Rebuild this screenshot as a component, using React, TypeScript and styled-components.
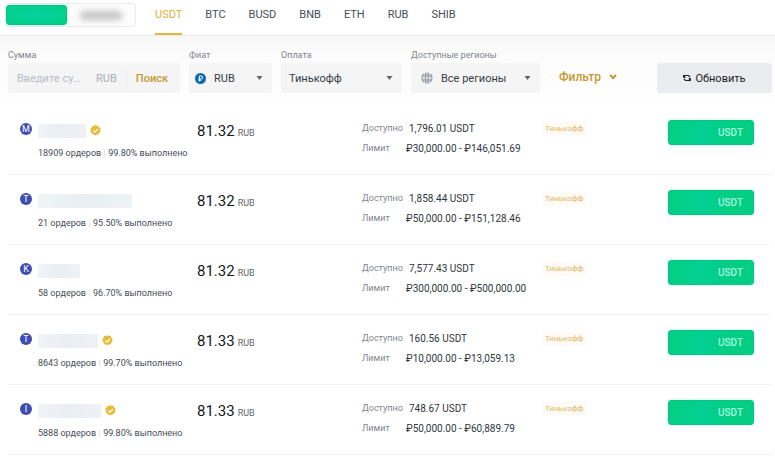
import React from "react";
import styled, { createGlobalStyle } from "styled-components";

const GlobalStyle = createGlobalStyle`
  * { box-sizing: border-box; }
  body {
    margin: 0;
    background: #fff;
    color: #1e2329;
    font-family: Roboto, "Noto Sans", sans-serif;
  }
  button, input, select { font-family: inherit; }
  button { cursor: pointer; }
`;

const Header = styled.header`
  display: flex;
  align-items: flex-start;
  height: 36px;
  padding: 3px 5px 0;
  border-bottom: 1px solid #e9eaec;
  background: #fff;
`;

const ModeSwitch = styled.div`
  display: flex;
  align-items: center;
  flex: none;
  width: 131px;
  height: 24px;
  border: 1px solid #ececec;
  border-radius: 3px;
  background: #fdfdfd;
`;

const ModeButton = styled.button<{ $active?: boolean }>`
  display: flex;
  align-items: center;
  justify-content: center;
  flex: ${(p) => (p.$active ? "0 0 61px" : "1")};
  height: 20px;
  padding: 0;
  border: ${(p) => (p.$active ? "1px solid #02c884" : "0")};
  border-radius: 3px;
  background: ${(p) => (p.$active ? "radial-gradient(#03d29e, #03cd86)" : "transparent")};
  box-shadow: ${(p) => (p.$active ? "0 0 3px #a5f5dc" : "none")};
`;

const HiddenWord = styled.span`
  width: 42px;
  height: 9px;
  border-radius: 4px;
  background: #c4c4c4;
  filter: blur(3px);
`;

const Tabs = styled.nav`
  display: flex;
  gap: 23px;
  margin-left: 19px;
`;

const Tab = styled.button<{ $active?: boolean }>`
  height: 32px;
  padding: 0 0 6px;
  border: 0;
  border-bottom: 2px solid ${(p) => (p.$active ? "#e3b93a" : "transparent")};
  background: none;
  color: ${(p) => (p.$active ? "#d9b13b" : "#474d57")};
  font-size: 11px;
  line-height: 20px;
`;

const Filters = styled.form`
  display: flex;
  align-items: flex-end;
  gap: 9px;
  height: 69px;
  padding: 0 3px 12px 8px;
  background: linear-gradient(#f8f8f8, #fcfcfc 20px, #fefefe);
`;

const Field = styled.div<{ $size: number }>`
  flex: ${(p) => p.$size} 1 0;
  min-width: 0;
`;

const FieldLabel = styled.label`
  display: block;
  height: 14px;
  color: #81858c;
  font-size: 9px;
  line-height: 12px;
  white-space: nowrap;
`;

const Control = styled.div`
  display: flex;
  align-items: center;
  gap: 6px;
  height: 30px;
  padding: 0 9px 0 6px;
  border-radius: 3px;
  background: #f5f5f5;
`;

const RegionControl = styled(Control)`
  padding-left: 10px;
`;

const AmountControl = styled(Control)`
  gap: 9px;
  padding: 0 12px 0 9px;
`;

const AmountInput = styled.input`
  flex: 1;
  width: 0;
  min-width: 0;
  padding: 0;
  border: 0;
  outline: 0;
  background: none;
  color: #474d57;
  font-size: 11px;
  text-overflow: ellipsis;
  &::placeholder { color: #b9bdc4; opacity: 1; }
`;

const Currency = styled.span`
  color: #aaaeb5;
  font-size: 11px;
`;

const Divider = styled.span`
  width: 1px;
  height: 18px;
  background: #ececec;
`;

const SearchButton = styled.button`
  padding: 0;
  border: 0;
  background: none;
  color: #c69834;
  font-size: 11px;
  font-weight: 500;
`;

const Select = styled.select`
  flex: 1;
  min-width: 0;
  height: 30px;
  padding: 0;
  margin-left: 2px;
  border: 0;
  outline: 0;
  appearance: none;
  background: none;
  color: #373c44;
  font-size: 11px;
`;

const FilterSlot = styled.div`
  flex: 108 1 0;
  min-width: 0;
`;

const FilterButton = styled.button`
  display: flex;
  align-items: center;
  gap: 8px;
  height: 32px;
  padding: 0 0 0 10px;
  border: 0;
  background: none;
  color: #c69834;
  font-size: 12px;
  font-weight: 500;
`;

const RefreshButton = styled.button`
  display: flex;
  align-items: center;
  justify-content: center;
  flex: 115 1 0;
  gap: 4px;
  margin-left: -9px;
  height: 30px;
  padding: 0;
  border: 0;
  border-radius: 3px;
  background: #eaecef;
  color: #1e2329;
  font-size: 11px;
`;

const Offers = styled.ul`
  margin: 0 4px 0 8px;
  padding: 0;
  list-style: none;
`;

const Offer = styled.li`
  display: grid;
  grid-template-columns: 177fr 165fr 182fr 124fr 86px;
  align-items: start;
  min-height: 70px;
  padding: 15px 17px 0 12px;
  border-bottom: 1px solid #f1f2f3;
`;

const Seller = styled.div`
  display: grid;
  grid-template-columns: 12px 1fr;
  column-gap: 6px;
  row-gap: 9px;
  padding-top: 3px;
  white-space: nowrap;
`;

const Avatar = styled.span`
  display: flex;
  align-items: center;
  justify-content: center;
  width: 12px;
  height: 12px;
  border-radius: 50%;
  background: #3f4db0;
  color: #fff;
  font-size: 9px;
  line-height: 12px;
`;

const NameLine = styled.div`
  display: flex;
  align-items: center;
  gap: 4px;
  height: 15px;
`;

const HiddenName = styled.span<{ $width: number }>`
  width: ${(p) => p.$width}px;
  height: 14px;
  background: linear-gradient(90deg, #f1f4f7, #e9eef3 50%, #eff2f5);
`;

const Stats = styled.div`
  display: flex;
  align-items: center;
  grid-column: 2;
  color: #474d57;
  font-size: 9px;
  line-height: 12px;
`;

const StatsDivider = styled.span`
  width: 1px;
  height: 7px;
  margin: 0 3px;
  background: #e3e5e8;
`;

const Price = styled.div`
  display: flex;
  align-items: baseline;
  gap: 3px;
  color: #14181d;
  font-size: 15px;
  line-height: 22px;
`;

const PriceUnit = styled.span`
  color: #5f656e;
  font-size: 9px;
`;

const Details = styled.dl`
  display: grid;
  gap: 4px;
  margin: 0;
`;

const Detail = styled.div<{ $gap: number }>`
  display: flex;
  align-items: center;
  gap: ${(p) => p.$gap}px;
  height: 16px;
  white-space: nowrap;
`;

const DetailName = styled.dt`
  width: 41px;
  color: #81858c;
  font-size: 9px;
`;

const DetailValue = styled.dd`
  margin: 0;
  color: #30363e;
  font-size: 10px;
`;

const Method = styled.span`
  justify-self: start;
  padding: 0 3px;
  margin: 1px 0 0 -2px;
  border-radius: 2px;
  background: #fefaf5;
  color: #e0b868;
  font-size: 8px;
  line-height: 15px;
`;

const BuyButton = styled.button`
  height: 25px;
  padding: 0 10px 0 0;
  border: 1px solid #04c583;
  border-radius: 3px;
  background: linear-gradient(90deg, #04ce84, #03d093 40%, #04ce84 70%);
  box-shadow: 0 0 3px #baf8e3;
  color: #a4f9df;
  font-size: 10px;
  font-weight: 500;
  text-align: right;
`;

const Caret = () => (
  <svg width="7" height="4" viewBox="0 0 7 4" aria-hidden="true">
    <path d="M0.5 0h6L3.5 4z" fill="#60656d" />
  </svg>
);

const RubleIcon = () => (
  <svg width="11" height="11" viewBox="0 0 11 11" aria-hidden="true">
    <circle cx="5.5" cy="5.5" r="5.5" fill="#0c66b0" />
    <path d="M4.4 8.5V3h1.8a1.5 1.5 0 0 1 0 3H3.4M3.4 7.3h2.8" fill="none" stroke="#fff" />
  </svg>
);

const GlobeIcon = () => (
  <svg width="12" height="12" viewBox="0 0 12 12" aria-hidden="true">
    <circle cx="6" cy="6" r="5.6" fill="#87909b" />
    <path d="M6 0v12M0 6h12" stroke="#f5f5f5" strokeWidth="0.9" />
    <path d="M4 .8C2.400 3.500 2.400 8.500 4 11.200M8 .8c1.600 2.700 1.600 7.700 0 10.400" fill="none" stroke="#f5f5f5" strokeWidth="1" />
  </svg>
);

const ChevronIcon = () => (
  <svg width="8" height="6" viewBox="0 0 8 6" aria-hidden="true">
    <path d="M1 1l3 3 3-3" fill="none" stroke="#c69834" strokeWidth="2" />
  </svg>
);

const RefreshIcon = () => (
  <svg width="8" height="8" viewBox="0 0 8 8" aria-hidden="true">
    <path
      d="M1.200 3.800V1.500H5.500L7 3M6.800 4.200V6.500H2.500L1 5"
      fill="none"
      stroke="#1e2329"
      strokeWidth="1.2"
    />
    <path d="M0 .5v3.200h3zM8 7.500V4.300H5z" fill="#1e2329" />
  </svg>
);

const VerifiedIcon = () => (
  <svg width="11" height="11" viewBox="0 0 11 11" role="img" aria-label="Проверен">
    <path
      d="M5.500 0l1.400.9 1.700-.1.600 1.600 1.400 1-.5 1.600.5 1.700-1.400 1-.6 1.600-1.700.1-1.400 1-1.400-1-1.700-.1-.6-1.600-1.400-1 .5-1.700-.5-1.600 1.400-1 .6-1.600 1.700.1z"
      fill="#e9bb35"
    />
    <path d="M3.200 5.600l1.600 1.600 3.100-3.200" fill="none" stroke="#fff" strokeWidth="1.2" />
  </svg>
);

const coins = ["USDT", "BTC", "BUSD", "BNB", "ETH", "RUB", "SHIB"];

const offers = [
  { letter: "M", name: 48, verified: true, orders: 18909, rate: "99.80%", price: "81.32", available: "1,796.01", limit: "₽30,000.00 - ₽146,051.69" },
  { letter: "T", name: 94, verified: false, orders: 21, rate: "95.50%", price: "81.32", available: "1,858.44", limit: "₽50,000.00 - ₽151,128.46" },
  { letter: "K", name: 42, verified: false, orders: 58, rate: "96.70%", price: "81.32", available: "7,577.43", limit: "₽300,000.00 - ₽500,000.00" },
  { letter: "T", name: 60, verified: true, orders: 8643, rate: "99.70%", price: "81.33", available: "160.56", limit: "₽10,000.00 - ₽13,059.13" },
  { letter: "I", name: 63, verified: true, orders: 5888, rate: "99.80%", price: "81.33", available: "748.67", limit: "₽50,000.00 - ₽60,889.79" },
];

export default function App() {
  return (
    <>
      <GlobalStyle />
      <Header>
        <ModeSwitch>
          <ModeButton type="button" $active aria-label="Купить" />
          <ModeButton type="button" aria-label="Продать">
            <HiddenWord />
          </ModeButton>
        </ModeSwitch>
        <Tabs>
          {coins.map((coin) => (
            <Tab key={coin} type="button" $active={coin === "USDT"}>
              {coin}
            </Tab>
          ))}
        </Tabs>
      </Header>
      <main>
        <Filters onSubmit={(e: React.FormEvent) => e.preventDefault()}>
          <Field $size={172}>
            <FieldLabel htmlFor="amount">Сумма</FieldLabel>
            <AmountControl>
              <AmountInput id="amount" placeholder="Введите сумму" />
              <Currency>RUB</Currency>
              <Divider />
              <SearchButton type="submit">Поиск</SearchButton>
            </AmountControl>
          </Field>
          <Field $size={83}>
            <FieldLabel htmlFor="fiat">Фиат</FieldLabel>
            <Control>
              <RubleIcon />
              <Select id="fiat">
                <option>RUB</option>
              </Select>
              <Caret />
            </Control>
          </Field>
          <Field $size={121}>
            <FieldLabel htmlFor="payment">Оплата</FieldLabel>
            <Control>
              <Select id="payment">
                <option>Тинькофф</option>
              </Select>
              <Caret />
            </Control>
          </Field>
          <Field $size={129}>
            <FieldLabel htmlFor="region">Доступные регионы</FieldLabel>
            <RegionControl>
              <GlobeIcon />
              <Select id="region">
                <option>Все регионы</option>
              </Select>
              <Caret />
            </RegionControl>
          </Field>
          <FilterSlot>
            <FilterButton type="button">
              Фильтр
              <ChevronIcon />
            </FilterButton>
          </FilterSlot>
          <RefreshButton type="button">
            <RefreshIcon />
            Обновить
          </RefreshButton>
        </Filters>
        <Offers>
          {offers.map((offer) => (
            <Offer key={offer.orders}>
              <Seller>
                <Avatar>{offer.letter}</Avatar>
                <NameLine>
                  <HiddenName $width={offer.name} />
                  {offer.verified && <VerifiedIcon />}
                </NameLine>
                <Stats>
                  {offer.orders} ордеров
                  <StatsDivider />
                  {offer.rate} выполнено
                </Stats>
              </Seller>
              <Price>
                {offer.price}
                <PriceUnit>RUB</PriceUnit>
              </Price>
              <Details>
                <Detail $gap={6}>
                  <DetailName>Доступно</DetailName>
                  <DetailValue>{offer.available} USDT</DetailValue>
                </Detail>
                <Detail $gap={3}>
                  <DetailName>Лимит</DetailName>
                  <DetailValue>{offer.limit}</DetailValue>
                </Detail>
              </Details>
              <Method>Тинькофф</Method>
              <BuyButton type="button">USDT</BuyButton>
            </Offer>
          ))}
        </Offers>
      </main>
    </>
  );
}
